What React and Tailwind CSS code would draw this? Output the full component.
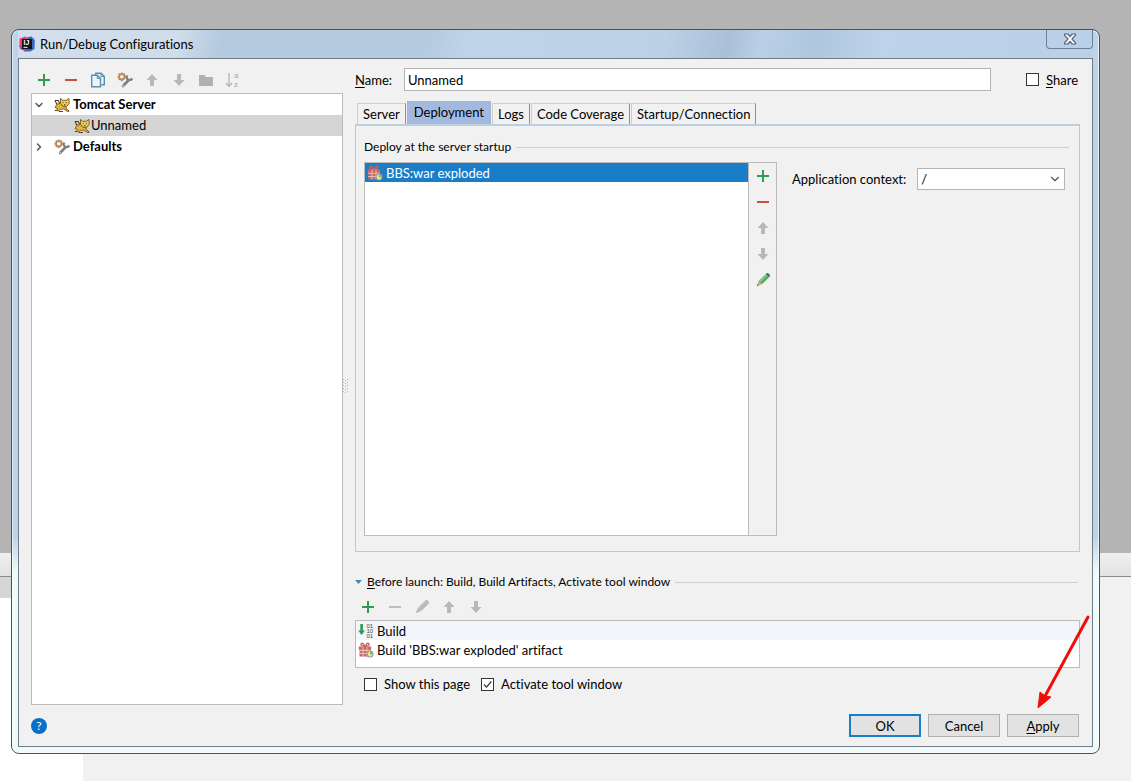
import React, { useState } from 'react';
import clsx from 'clsx';
import { ChevronDown, ChevronRight } from 'lucide-react';

const PlusIcon = () => (
    <svg width="16" height="16" viewBox="0 0 16 16">
        <path d="M2 8h12M8 2v12" stroke="#2f9b51" strokeWidth="2" fill="none" />
    </svg>
);

const MinusIcon = ({ disabled }) => (
    <svg width="16" height="16" viewBox="0 0 16 16">
        <path d="M2 8h12" stroke={disabled ? '#bdbdbd' : '#c4513f'} strokeWidth="2" fill="none" />
    </svg>
);

const CopyIcon = () => (
    <svg width="16" height="16" viewBox="0 0 16 16" fill="#edf5fa" stroke="#5f8fae" strokeWidth="1.4">
        <path d="M5.7 3V1.2h5.4l3.2 3.2v8.3h-3" />
        <path d="M1.7 3.2h5.6l3.2 3.2v8.4H1.7z" />
        <path d="M7.2 3.4v3.1h3.2M11 1.4v3.1h3.1" fill="none" strokeWidth="1" />
    </svg>
);

const WrenchIcon = () => (
    <svg width="16" height="16" viewBox="0 0 16 16" fill="none" className="shrink-0">
        <circle cx="4.8" cy="4.8" r="2.7" stroke="#bf8a5a" strokeWidth="1.8" />
        <path
            d="M4.8 .4v1.5M4.8 7.6v1.600M.4 4.800h1.500M7.700 4.800h1.500M1.700 1.700l1 1M1.700 7.900l1-1M7.900 1.700l-1 1"
            stroke="#bf8a5a"
            strokeWidth="1.700"
        />
        <path d="M6 14l4.800-5" stroke="#7f7f7f" strokeWidth="2.600" strokeLinecap="round" />
        <path d="M10.300 3.400c-.900 1.700-.700 3.200.500 4.100 1.300 1 3 .600 4.600-.800" stroke="#7f7f7f" strokeWidth="2.200" />
        <circle cx="6.200" cy="13.700" r=".7" fill="#eee" />
    </svg>
);

const UpIcon = () => (
    <svg width="16" height="16" viewBox="0 0 16 16">
        <path d="M8 2l5.500 6H10v6H6V8H2.500z" fill="#b8b8b8" />
    </svg>
);

const DownIcon = () => (
    <svg width="16" height="16" viewBox="0 0 16 16">
        <path d="M8 14l5.500-6H10V2H6v6H2.500z" fill="#b8b8b8" />
    </svg>
);

const FolderIcon = () => (
    <svg width="16" height="16" viewBox="0 0 16 16">
        <path d="M1 3h5.500l1.500 2h7v9H1z" fill="#adb3b5" />
    </svg>
);

const SortIcon = () => (
    <svg width="16" height="16" viewBox="0 0 16 16">
        <path d="M4 1v13M1 11l3 3.500L7 11" stroke="#b5b5b5" strokeWidth="1.300" fill="none" />
        <g fontSize="8" fill="#a6a6a6" fontFamily="Liberation Sans">
            <text x="9" y="6">a</text>
            <text x="9" y="15">z</text>
        </g>
    </svg>
);

const PencilIcon = ({ disabled }) => (
    <svg width="16" height="16" viewBox="0 0 16 16">
        <path d="M3.600 9.200l7-7 3.500 3.100-7.200 7z" fill={disabled ? '#b8b8b8' : '#4fae62'} />
        <path d="M5 9.700l7-7" stroke={disabled ? '#c4c4c4' : '#8ed69a'} strokeWidth="1.200" />
        <path d="M3.600 9.200L2 14l4.900-1.700z" fill={disabled ? '#b8b8b8' : '#c9a277'} />
        <path d="M2.600 12.300L2 14l1.700-.600z" fill={disabled ? '#b8b8b8' : '#5a4634'} />
        <path d="M10.600 2.200l1.400-1.200h1L15 3v1l-.900 1.300z" fill={disabled ? '#b8b8b8' : '#3c7f4b'} />
    </svg>
);

const TomcatIcon = () => (
    <svg width="16" height="16" viewBox="0 0 16 16" className="shrink-0">
        <path d="M.8 3.500h3.400l1.500 3M1 3.500l2 4M.8 13.500h3l2-2M5 14.500h4M11.500 12l3.700 2.500" stroke="#4a3f22" strokeWidth="1.100" fill="none" />
        <path d="M1 10.500l2-3.500 3.500-.500 2 1.500 3.500 2 .500 2 2.500 1.700-1.500.8-4-2.500-3 .500-2.500 1.500-1.500-.5 1-2z" fill="#e3b23a" stroke="#6b5316" strokeWidth=".800" />
        <path d="M6.500 1.500l2.200 1.800h3.600l2.500-1.800.5 4.500-2.500 3.300H9L6.400 6.200z" fill="#f6cf55" stroke="#6b5316" strokeWidth=".900" />
        <path d="M9 5.200v1M12.300 5.200v1M10 7.800h1.500" stroke="#3c2f10" strokeWidth="1" />
    </svg>
);

const ArtifactIcon = () => (
    <svg width="16" height="16" viewBox="0 0 16 16" className="shrink-0">
        <path d="M6.500 4.200C4 4.500 2.300 3 3.300 1.600 4.500.500 6 2 6.500 4.200zM7.500 4.200C10 4.500 11.700 3 10.700 1.600 9.500.500 8 2 7.500 4.200z" fill="none" stroke="#c4625b" strokeWidth="1.400" />
        <path d="M.8 4.500h12.400V8H.8zM1.500 8.600h11v5.900h-11z" fill="#c96a62" />
        <path d="M5 4.500v10M9 4.500v10M1 8.300h12M1 11.500h12" stroke="#f0c3be" strokeWidth=".900" />
        <circle cx="12" cy="12" r="3.500" fill="#8d9aa5" />
        <path d="M12 9.500l2.300 1v1.700c0 1.200-1 2-2.300 2.600-1.300-.600-2.300-1.400-2.300-2.600v-1.700z" fill="#e3e58f" />
        <path d="M12 9.500l2.300 1V12H12z" fill="#76b55b" />
    </svg>
);

const BuildIcon = () => (
    <svg width="16" height="16" viewBox="0 0 16 16" className="shrink-0">
        <path d="M2.300 1h2.600v6.500H7L3.600 12 .2 7.500h2.100z" fill="#2f9b51" />
        <g fontSize="6" fill="#444" fontFamily="Liberation Sans">
            <text x="8.500" y="5">01</text>
            <text x="8.500" y="10">10</text>
            <text x="8.500" y="15">01</text>
        </g>
    </svg>
);

const IdeaIcon = () => (
    <svg width="16" height="16" viewBox="0 0 16 16" className="shrink-0">
        <path d="M.5 2.500L6.500.500l5 3-5 8-6-1z" fill="#ea3f76" />
        <path d="M9 1l3.500-.5L15.800 4l-.3 9-4 2.500H5z" fill="#3a68c8" />
        <path d="M0 9l5 2 2 4.500-6-2.500z" fill="#b04a9c" />
        <rect x="3" y="3" width="10" height="10" fill="#15101a" />
        <text x="4.500" y="9" fontSize="7" fontWeight="bold" fill="#fff" fontFamily="Liberation Sans">IJ</text>
        <path d="M4.500 11.300h4" stroke="#fff" strokeWidth="1" />
    </svg>
);

const CloseIcon = () => (
    <svg width="14" height="12" viewBox="0 0 14 12">
        <path
            d="M1.500 1h3.300L7 3.500 9.200 1h3.300v1.200L9 6l3.500 3.800V11H9.200L7 8.500 4.800 11H1.500V9.800L5 6 1.500 2.200z"
            fill="#fbfcfe"
            stroke="#55637a"
            strokeWidth="1.200"
            strokeLinejoin="round"
        />
    </svg>
);

function IconButton({ label, disabled, children }) {
    return (
        <button type="button" aria-label={label} disabled={disabled} className="flex size-4 items-center justify-center">
            {children}
        </button>
    );
}

function Checkbox({ checked, onChange, children }) {
    return (
        <label className="flex items-center gap-[7px]">
            <span className="relative flex">
                <input
                    type="checkbox"
                    checked={checked}
                    onChange={(e) => onChange(e.target.checked)}
                    className="size-[13px] appearance-none border border-[#333] bg-white"
                />
                {checked && (
                    <svg className="pointer-events-none absolute inset-0" width="13" height="13" viewBox="0 0 13 13">
                        <path d="M3 6.500l2.500 2.700L10.300 3.500" fill="none" stroke="#333" strokeWidth="1.200" />
                    </svg>
                )}
            </span>
            <span>{children}</span>
        </label>
    );
}

const tabs = ['Server', 'Deployment', 'Logs', 'Code Coverage', 'Startup/Connection'];

function Backdrop() {
    return (
        <div className="absolute inset-0 -z-10 flex flex-col bg-white">
            <div className="flex-1 bg-[#b4b4b4]"></div>
            <div className="h-6 border-b border-[#8c8c8c] bg-linear-to-b from-[#f0f0f0] to-[#e2e2e2]"></div>
            <div className="flex h-[204px]">
                <div className="w-[83px]">
                    <div className="h-[21px] bg-[#d6d6d6]"></div>
                </div>
                <div className="flex-1 bg-[#f1f1f1]"></div>
            </div>
        </div>
    );
}

function ConfigTree() {
    return (
        <div className="flex w-[312px] shrink-0 flex-col">
            <div className="flex h-[25px] items-center gap-[11px] pb-[2px] pl-[5px]">
                <IconButton label="Add"><PlusIcon /></IconButton>
                <IconButton label="Remove"><MinusIcon /></IconButton>
                <IconButton label="Copy"><CopyIcon /></IconButton>
                <IconButton label="Edit defaults"><WrenchIcon /></IconButton>
                <IconButton label="Move up" disabled><UpIcon /></IconButton>
                <IconButton label="Move down" disabled><DownIcon /></IconButton>
                <IconButton label="New folder" disabled><FolderIcon /></IconButton>
                <IconButton label="Sort" disabled><SortIcon /></IconButton>
            </div>
            <ul className="flex-1 border border-[#bcbcbc] bg-white leading-[21px]">
                <li className="flex h-[21px] items-center gap-[3px] pl-px font-bold">
                    <ChevronDown size={12} strokeWidth={3} className="mr-[6px] text-[#555]" />
                    <TomcatIcon />
                    Tomcat Server
                </li>
                <li className="flex h-[21px] items-center bg-[#d4d4d4] pl-[42px]">
                    <TomcatIcon />
                    <span className="pl-px">Unnamed</span>
                </li>
                <li className="flex h-[21px] items-center gap-[3px] pl-px font-bold">
                    <ChevronRight size={12} strokeWidth={3} className="mr-[6px] text-[#555]" />
                    <WrenchIcon />
                    Defaults
                </li>
            </ul>
        </div>
    );
}

function DeploymentPanel() {
    return (
        <div className="flex flex-1 flex-col border border-t-2 border-[#c6c6c6] border-t-[#bccfe0] pt-3 pr-[10px] pb-[15px] pl-2">
            <div className="flex items-center gap-[5px] text-xs leading-[18px]">
                <span>Deploy at the server startup</span>
                <span className="h-px flex-1 bg-[#cfcfcf]"></span>
            </div>
            <div className="mt-[6px] flex flex-1 gap-[15px]">
                <div className="flex flex-[411] border border-[#bcbcbc]">
                    <ul className="flex-1 border-r border-[#bcbcbc] bg-white">
                        <li className="flex h-[19px] items-center gap-[3px] bg-[#1a7dc8] pl-[2px] text-white">
                            <ArtifactIcon />
                            BBS:war exploded
                        </li>
                    </ul>
                    <div className="flex w-[27px] flex-col items-center gap-[10px] pt-[5px]">
                        <IconButton label="Add artifact"><PlusIcon /></IconButton>
                        <IconButton label="Remove artifact"><MinusIcon /></IconButton>
                        <IconButton label="Move artifact up" disabled><UpIcon /></IconButton>
                        <IconButton label="Move artifact down" disabled><DownIcon /></IconButton>
                        <IconButton label="Edit artifact"><PencilIcon /></IconButton>
                    </div>
                </div>
                <div className="flex flex-[273] items-start gap-[11px] pt-[6px] pr-1">
                    <label htmlFor="context" className="leading-[22px] whitespace-nowrap">Application context:</label>
                    <div className="relative flex-1">
                        <select
                            id="context"
                            className="h-[22px] w-full appearance-none border border-[#b4b4b4] bg-white pl-[3px]"
                        >
                            <option>/</option>
                        </select>
                        <ChevronDown size={14} className="pointer-events-none absolute top-1 right-[3px] text-[#555]" />
                    </div>
                </div>
            </div>
        </div>
    );
}

function BeforeLaunch() {
    const [showPage, setShowPage] = useState(false);
    const [activate, setActivate] = useState(true);

    return (
        <div className="pt-[21px] pb-3">
            <div className="flex items-center gap-[5px] pr-[2px] text-xs leading-[18px]">
                <svg width="7" height="4" viewBox="0 0 7 4">
                    <path d="M0 0h7L3.500 4z" fill="#3a8dc0" />
                </svg>
                <span><u className="underline-offset-2">B</u>efore launch: Build, Build Artifacts, Activate tool window</span>
                <span className="h-px flex-1 bg-[#cfcfcf]"></span>
            </div>
            <div className="flex h-[29px] items-center gap-[11px] pl-[5px] pt-[3px]">
                <IconButton label="Add task"><PlusIcon /></IconButton>
                <IconButton label="Remove task" disabled><MinusIcon disabled /></IconButton>
                <IconButton label="Edit task" disabled><PencilIcon disabled /></IconButton>
                <IconButton label="Move task up" disabled><UpIcon /></IconButton>
                <IconButton label="Move task down" disabled><DownIcon /></IconButton>
            </div>
            <ul className="border border-[#bcbcbc] bg-white pb-2">
                <li className="flex h-[19px] items-center gap-[3px] bg-[#f2f6fa] pl-[2px]">
                    <BuildIcon />
                    Build
                </li>
                <li className="flex h-[19px] items-center gap-[3px] pl-[2px]">
                    <ArtifactIcon />
                    Build 'BBS:war exploded' artifact
                </li>
            </ul>
            <div className="flex gap-[11px] pt-[7px] pl-[9px]">
                <Checkbox checked={showPage} onChange={setShowPage}>Show this page</Checkbox>
                <Checkbox checked={activate} onChange={setActivate}>Activate tool window</Checkbox>
            </div>
        </div>
    );
}

export default function App() {
    const [name, setName] = useState('Unnamed');
    const [share, setShare] = useState(false);
    const [tab, setTab] = useState('Deployment');

    return (
        <div className="relative isolate flex min-h-screen flex-col pt-[29px] pr-[31px] pb-[27px] pl-[11px] font-['Lato','Open_Sans',sans-serif] text-[13px] leading-[18px] text-black [font-variant-ligatures:none]">
            <Backdrop />

            <div className="flex flex-1 flex-col rounded-lg border border-[#46525e] bg-linear-to-b from-[#bdd3ea] from-70% to-[#effbfa] to-75% px-[6px] pb-[6px] shadow-[inset_0_0_0_1px_rgba(255,255,255,0.6)]">
                <div className="flex h-7 items-start justify-between bg-[linear-gradient(100deg,#d3dfec_0%,#cfdcea_15%,#b4cade_19%,#b4cade_38%,#bfd4e9_42%,#bcd1e6_60%,#a9c0d8_66%,#bad0e6_69%,#aec6df_74%,#bdd3ea_80%,#b9d0e8_100%)]">
                    <h1 className="flex h-7 items-center gap-[5px] pl-px">
                        <IdeaIcon />
                        Run/Debug Configurations
                    </h1>
                    <button
                        type="button"
                        aria-label="Close"
                        className="flex h-[19px] w-[47px] items-center justify-center rounded-b border border-t-0 border-[#6d7f95]"
                    >
                        <CloseIcon />
                    </button>
                </div>

                <div className="flex flex-1 flex-col border border-[#6f7b87] bg-[#f1f1f1] px-3 py-[9px]">
                    <div className="flex flex-1">
                        <ConfigTree />
                        <div className="flex w-3 shrink-0 items-center">
                            <svg width="5" height="15" viewBox="0 0 5 15" fill="#b5b5b5">
                                <path d="M0 0h1v1H0zM2 1h1v1H2zM4 0h1v1H4zM0 3h1v1H0zM2 4h1v1H2zM4 3h1v1H4zM0 6h1v1H0zM2 7h1v1H2zM4 6h1v1H4zM0 9h1v1H0zM2 10h1v1H2zM4 9h1v1H4zM0 12h1v1H0zM2 13h1v1H2zM4 12h1v1H4z" />
                            </svg>
                        </div>
                        <div className="flex min-w-0 flex-1 flex-col">
                            <div className="flex items-center pr-[2px]">
                                <label htmlFor="name" className="w-[49px]"><u className="underline-offset-2">N</u>ame:</label>
                                <input
                                    id="name"
                                    type="text"
                                    value={name}
                                    onChange={(e) => setName(e.target.value)}
                                    className="mr-[35px] h-[23px] min-w-0 flex-1 border border-[#b4b4b4] bg-white px-[3px]"
                                />
                                <Checkbox checked={share} onChange={setShare}><u className="underline-offset-2">S</u>hare</Checkbox>
                            </div>

                            <div role="tablist" className="flex items-end gap-px pt-[10px] pl-[2px]">
                                {tabs.map((t) => (
                                    <button
                                        key={t}
                                        type="button"
                                        role="tab"
                                        aria-selected={t === tab}
                                        onClick={() => setTab(t)}
                                        className={clsx(
                                            'border border-b-0 whitespace-nowrap',
                                            t === tab
                                                ? 'h-[23px] border-[#a0b4d4] bg-[#a4b9e0] px-[6px] pb-[2px]'
                                                : 'h-[21px] border-[#cfcfcf] border-r-[#8f8f8f] px-[5px]'
                                        )}
                                    >
                                        {t}
                                    </button>
                                ))}
                            </div>

                            <DeploymentPanel />
                            <BeforeLaunch />
                        </div>
                    </div>

                    <div className="flex items-center justify-between pt-[9px] pr-px">
                        <button
                            type="button"
                            aria-label="Help"
                            className="flex size-4 items-center justify-center rounded-full bg-[#0b6fc9] text-xs text-white"
                        >
                            ?
                        </button>
                        <div className="flex gap-[7px]">
                            <button type="button" className="h-[23px] w-[72px] border-2 border-[#1a7dc8] bg-[#e2e2e2]">OK</button>
                            <button type="button" className="h-[23px] w-[72px] border border-[#b0b0b0] bg-[#e2e2e2]">Cancel</button>
                            <button type="button" className="h-[23px] w-[72px] border border-[#b0b0b0] bg-[#e2e2e2]">
                                <u className="underline-offset-2">A</u>pply
                            </button>
                        </div>
                    </div>
                </div>
            </div>

            <svg className="pointer-events-none absolute right-9 bottom-[66px]" width="65" height="105" viewBox="0 0 65 105">
                <path d="M58 7L14 88" stroke="#f40b0b" strokeWidth="3" strokeLinecap="round" />
                <path d="M8 98l2-16 5 4 6 1z" fill="#f40b0b" stroke="#f40b0b" strokeLinejoin="round" />
            </svg>
        </div>
    );
}
